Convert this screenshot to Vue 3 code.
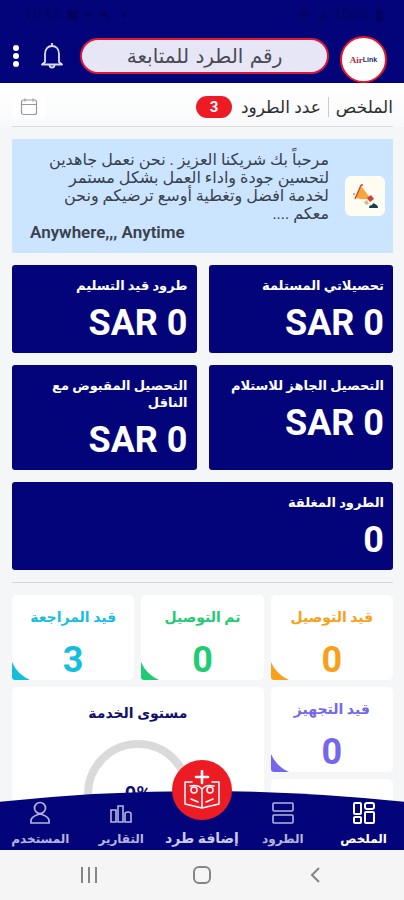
<script setup>
const amounts = [
  { title: 'تحصيلاتي المستلمة', value: 'SAR 0' },
  { title: 'طرود قيد التسليم', value: 'SAR 0' },
  { title: 'التحصيل الجاهز للاستلام', value: 'SAR 0' },
  { title: 'التحصيل المقبوض مع الناقل', value: 'SAR 0' },
  { title: 'الطرود المغلقة', value: '0', wide: true },
]
const statuses = [
  { title: 'قيد التوصيل', value: 0, tone: 'orange' },
  { title: 'تم التوصيل', value: 0, tone: 'green' },
  { title: 'قيد المراجعة', value: 3, tone: 'cyan' },
  { title: 'قيد التجهيز', value: 0, tone: 'violet' },
]
const welcome = [
  'مرحباً بك شريكنا العزيز . نحن نعمل جاهدين',
  'لتحسين جودة واداء العمل بشكل مستمر',
  'لخدمة افضل وتغطية أوسع ترضيكم ونحن',
  'معكم ....',
]
</script>

<template>
  <div class="app" dir="rtl" lang="ar">
    <header class="top">
      <div class="status" dir="ltr">
        <span class="status-side">10:55
          <svg width="62" height="12" viewBox="0 0 62 12"><path d="M1 1h11v10H1zM18 2v8l4-4 4 4V2l-4 4zM36 1a4 4 0 0 1 4 5l5 5-2 1-5-5a4 4 0 0 1-5-4l2 1 2-1z" /><circle cx="58" cy="6" r="2" /></svg>
        </span>
        <span class="status-side">
          <svg width="32" height="12" viewBox="0 0 32 12"><path d="M0 4q7-6 14 0l-7 7zM20 11l9-9v9z" opacity=".6" /></svg>
          100%
          <svg width="9" height="13" viewBox="0 0 9 13"><path d="M1 2h2V0h3v2h2v11H1z" /></svg>
        </span>
      </div>
      <div class="bar">
        <a class="logo" href="#" aria-label="Air Link" dir="ltr"><span class="air">Air</span><span class="link">Link</span></a>
        <input class="search" type="text" placeholder="رقم الطرد للمتابعة" aria-label="رقم الطرد للمتابعة" />
        <button class="icon-btn bell" type="button" aria-label="الإشعارات">
          <svg width="22" height="26" viewBox="0 0 22 26" fill="none" stroke="#dcdcf5" stroke-width="1.8" stroke-linejoin="round"><path d="M4 19V11c0-5 3-8 7-8s7 3 7 8v8l3 2.500H1z" /><path d="M11 3V0M8.500 22a2.500 2.500 0 0 0 5 0" /></svg>
        </button>
        <button class="icon-btn dots" type="button" aria-label="القائمة">
          <svg width="8" height="24" viewBox="0 0 8 24" fill="#fff"><circle cx="4" cy="4" r="3" /><circle cx="4" cy="12" r="3" /><circle cx="4" cy="20" r="3" /></svg>
        </button>
      </div>
    </header>

    <main class="content">
      <div class="summary">
        <span>الملخص</span>
        <span class="split"></span>
        <span>عدد الطرود</span>
        <span class="badge">3</span>
        <button class="calendar" type="button" aria-label="التاريخ">
          <svg width="18" height="18" viewBox="0 0 18 18" fill="none" stroke="#999" stroke-width="1.200"><rect x="1.500" y="2" width="15" height="14.500" rx="2" /><path d="M1.500 6.500h15M5 .5v3M13 .5v3" /></svg>
        </button>
      </div>

      <section class="banner">
        <div class="horn">
          <svg width="28" height="28" viewBox="0 0 28 28"><path d="M10 4 20 17Q14 18 4 16z" fill="#f7a63b" /><path d="M10 3 4 17" stroke="#c93a35" stroke-width="1.200" /><path d="m16 16 4-3 3 4-4 3z" fill="#d83b35" /><path d="m13 20 3-2 2 4-3 1z" fill="#c8bca0" /><path d="M18 26q0-3 3-3 1-3 3-1 3 1 3 4z" fill="#16414a" /><circle cx="3" cy="12" r="1" fill="#e3813a" /><circle cx="11" cy="3" r="1" fill="#c93a35" /></svg>
        </div>
        <div class="welcome">
          <p v-for="line in welcome" :key="line">{{ line }}</p>
          <p class="slogan" dir="ltr">Anywhere,,, Anytime</p>
        </div>
      </section>

      <section class="amounts">
        <article v-for="a in amounts" :key="a.title" class="amount" :class="{ wide: a.wide }">
          <h2>{{ a.title }}</h2>
          <strong dir="ltr">{{ a.value }}</strong>
        </article>
      </section>

      <section class="statuses">
        <article v-for="s in statuses" :key="s.title" class="state" :class="s.tone">
          <h3>{{ s.title }}</h3>
          <strong>{{ s.value }}</strong>
          <svg class="corner" width="18" height="18" viewBox="0 0 18 18"><path d="M0 0Q5 12 18 18H3Q0 18 0 15z" fill="currentColor" /></svg>
        </article>
        <article class="service">
          <h3>مستوى الخدمة</h3>
          <div class="gauge">
            <svg width="108" height="108" viewBox="0 0 108 108"><circle cx="54" cy="54" r="50" fill="none" stroke="#dadada" stroke-width="8" /></svg>
            <span dir="ltr">0%</span>
          </div>
        </article>
        <article class="state"></article>
      </section>
    </main>

    <footer class="bottom">
      <nav class="tabs">
        <svg class="curve" viewBox="0 0 404 60" preserveAspectRatio="none"><path d="M0 11Q202-11 404 11V60H0z" fill="#04047a" /></svg>
        <a class="tab active" href="#">
          <svg width="24" height="24" viewBox="0 0 24 24" fill="none" stroke="currentColor" stroke-width="2"><rect x="2" y="2" width="7" height="11" rx="1" /><rect x="13" y="2" width="9" height="6" rx="2" /><rect x="2" y="16" width="7" height="6" rx="1" /><rect x="13" y="11" width="9" height="11" rx="1" /></svg>
          <span>الملخص</span>
        </a>
        <a class="tab" href="#">
          <svg width="24" height="24" viewBox="0 0 24 24" fill="none" stroke="currentColor" stroke-width="1.600"><rect x="2" y="2" width="20" height="8" rx="1" /><rect x="2" y="14" width="20" height="8" rx="1" /></svg>
          <span>الطرود</span>
        </a>
        <a class="tab add" href="#">
          <span class="fab">
            <svg width="40" height="40" viewBox="0 0 40 40" fill="none" stroke="#fff" stroke-width="1.500" stroke-linejoin="round" stroke-linecap="round"><path d="M20 1v12M14 7h12" stroke-width="2.600" /><path d="M10 12H3v22l17 4 17-4V12h-7" /><path d="M8 16q8-2 12 3 4-5 12-3M20 19v18M9 29l7 3M24 32l7-3" /><circle cx="12" cy="20" r="3" /><circle cx="28" cy="20" r="3" /></svg>
          </span>
          <span>إضافة طرد</span>
        </a>
        <a class="tab" href="#">
          <svg width="24" height="24" viewBox="0 0 24 24" fill="none" stroke="currentColor" stroke-width="1.600"><path d="M2 9h5v12H2zM9 5h5v16H9zM16 21v-8q0-2 3-2t3 2v8z" /></svg>
          <span>التقارير</span>
        </a>
        <a class="tab" href="#">
          <svg width="24" height="24" viewBox="0 0 24 24" fill="none" stroke="currentColor" stroke-width="1.700"><circle cx="12" cy="7" r="5.500" /><path d="M3 22v-3q1-4 9-6 8 2 9 6v3z" /></svg>
          <span>المستخدم</span>
        </a>
      </nav>
      <div class="system">
        <button type="button" aria-label="رجوع"><svg width="20" height="20" viewBox="0 0 20 20"><path d="M14 3 7 10l7 7" /></svg></button>
        <button type="button" aria-label="الرئيسية"><svg width="20" height="20" viewBox="0 0 20 20"><rect x="2" y="2" width="16" height="16" rx="5" /></svg></button>
        <button type="button" aria-label="التطبيقات"><svg width="20" height="20" viewBox="0 0 20 20"><path d="M3 2v16M10 2v16M17 2v16" /></svg></button>
      </div>
    </footer>
  </div>
</template>

<style>
body { background: #f4f6f8; }
</style>

<style scoped>
* { box-sizing: border-box; }
h2, h3, p { margin: 0; }
button { border: 0; padding: 0; background: none; display: flex; align-items: center; justify-content: center; }
a { text-decoration: none; }
svg { display: block; flex: none; }
.app { display: flex; flex-direction: column; height: 100vh; overflow: hidden; background: #f4f6f8; font-family: Roboto, "DejaVu Sans", sans-serif; color: #2b2b2b; }

.top { background: #04047a; }
.status { display: flex; justify-content: space-between; align-items: center; height: 36px; padding: 0 20px 6px 24px; font-size: 15px; color: #03035f; }
.status svg { fill: currentColor; }
.status-side { display: flex; align-items: center; gap: 5px; }
.bar { display: flex; align-items: center; padding: 0 17px 0 12px; height: 47px; }
.logo { width: 47px; height: 47px; border-radius: 50%; border: 2px solid #ea1622; background: #fff; display: flex; align-items: center; justify-content: center; font: bold 9px "Liberation Sans", sans-serif; }
.air { color: #b0263a; font-family: "Liberation Serif", serif; }
.link { color: #1c2a6b; font-size: 7px; }
.search { flex: 1; min-width: 0; height: 36px; margin: 2px 11px 10px 0; border: 2px solid #dc1838; border-radius: 18px; background: #e7e6f6; text-align: center; font-family: "DejaVu Sans", sans-serif; font-size: 20px; color: #4a4a55; }
.search::placeholder { color: #4a4a55; opacity: 1; }
.icon-btn { height: 28px; margin-bottom: 8px; }
.bell { margin-right: 17px; }
.dots { margin-right: 21px; }

.content { flex: 1; min-height: 0; overflow: hidden; padding: 0 11px 0 12px; }
.summary { display: flex; align-items: center; height: 44px; margin: 0 -11px 12px -12px; padding: 4px 11px 0 12px; background: linear-gradient(#fff, #f8f9fa); font-size: 17px; color: #2e2e2e; position: relative; }
.summary::after { content: ""; position: absolute; bottom: 0; left: 12px; right: 11px; height: 1px; background: #dcdcde; }
.split { width: 1px; height: 20px; background: #ccc; margin: 0 7px; }
.badge { background: #ed1c24; color: #fff; width: 36px; height: 22px; line-height: 22px; border-radius: 11px; text-align: center; font-weight: 700; font-size: 15px; margin-right: 9px; }
.calendar { margin-right: auto; width: 34px; height: 24px; border-radius: 6px; background: #fff; }

.banner { display: flex; align-items: center; background: #cbe4ff; padding: 12px 8px 12px 18px; min-height: 114px; }
.horn { flex: none; width: 40px; height: 40px; border-radius: 6px; background: #fffcf2; display: flex; align-items: center; justify-content: center; }
.welcome { flex: 1; min-width: 0; padding-right: 16px; font-size: 16px; line-height: 18px; color: #38414d; }
.welcome p { white-space: nowrap; }
.welcome .slogan { text-align: left; font-size: 17px; font-weight: 600; }

.amounts { display: grid; grid-template-columns: 1fr 1fr; gap: 12px; margin-top: 12px; padding-bottom: 12px; border-bottom: 1px solid #d5d7da; }
.amount { background: #04047a; border-radius: 3px; color: #fff; padding: 12px 9px 10px; }
.amount h2 { font-size: 13px; line-height: 17px; }
.amount strong { display: block; text-align: right; font-size: 36px; line-height: 40px; margin-top: 9px; }
.wide { grid-column: 1 / -1; }

.statuses { display: grid; grid-template-columns: repeat(3, 1fr); grid-auto-rows: 85px; gap: 7px; margin-top: 12px; }
.state, .service { background: #fff; border-radius: 5px; text-align: center; position: relative; }
.state { padding-top: 12px; }
.state h3 { font-size: 14px; line-height: 20px; }
.state strong { display: block; font-size: 36px; line-height: 40px; margin-top: 13px; }
.corner { position: absolute; left: 0; bottom: 0; }
.orange { color: #f9a01b; }
.green { color: #1fcb73; }
.cyan { color: #15bfdc; }
.violet { color: #7467ee; }
.service { grid-column: 2 / 4; grid-row: 2 / 4; padding-top: 16px; color: #11116b; }
.service h3 { font-size: 14px; line-height: 20px; }
.gauge { display: grid; place-items: center; margin-top: 17px; }
.gauge > * { grid-area: 1 / 1; }
.gauge span { font-size: 20px; font-weight: 700; }

.bottom { position: relative; margin-top: -12px; }
.tabs { position: relative; display: grid; grid-template-columns: repeat(5, 1fr); grid-template-rows: 59px; }
.curve { position: absolute; inset: 0; width: 100%; height: 100%; }
.tab { position: relative; display: flex; flex-direction: column; align-items: center; padding-top: 10px; color: #b4b4dc; font-size: 12px; line-height: 16px; gap: 6px; font-weight: 700; white-space: nowrap; }
.active { color: #fff; }
.tab.add { padding: 0 0 4px; gap: 10px; justify-content: flex-end; font-size: 14px; color: #c9c9ea; }
.fab { width: 60px; height: 60px; border-radius: 50%; background: #ed1c24; display: flex; align-items: center; justify-content: center; flex: none; }
.system { display: grid; grid-template-columns: repeat(3, 1fr); height: 50px; padding: 0 32px; background: #f5f5f5; }
.system svg { fill: none; stroke: #858585; stroke-width: 2; }
</style>
